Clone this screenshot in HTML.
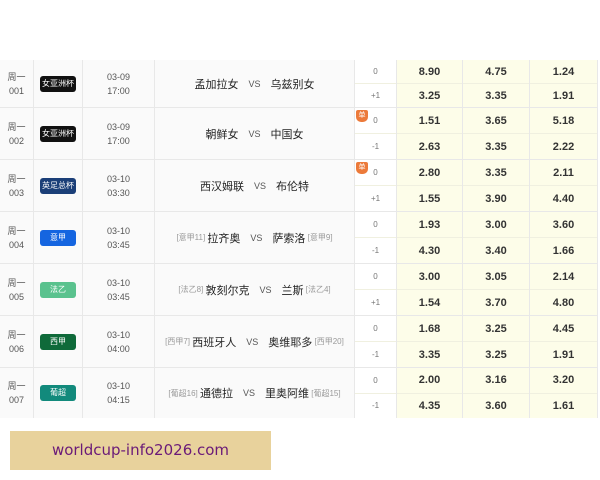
<!DOCTYPE html>
<html><head><meta charset="utf-8"><style>
body{margin:0;width:600px;height:480px;background:#fff;position:relative;overflow:hidden;font-family:"Liberation Sans","Noto Sans CJK SC",sans-serif;}
.row{position:absolute;left:0;width:598px;border-bottom:1px solid #e8e8e8;background:#fafafa;}
.c{position:absolute;top:0;bottom:0;border-right:1px solid #e8e8e8;box-sizing:border-box;display:flex;align-items:center;justify-content:center;text-align:center;}
.n{left:0;width:34px;font-size:9px;color:#555;line-height:14px;}
.b{left:34px;width:49px;}
.b span{display:inline-block;width:36px;height:16px;line-height:16px;border-radius:3px;color:#fff;font-size:8px;white-space:nowrap;overflow:hidden;}
.d{left:83px;width:72px;font-size:9px;color:#555;line-height:14px;}
.t{left:155px;width:200px;font-size:11px;color:#222;}
.t .vs{color:#555;font-size:9px;margin:0 10px;}
.t .r{color:#999;font-size:8px;}
.h{left:355px;width:42px;background:#fff;flex-direction:column;}
.h div,.o div{height:50%;width:100%;display:flex;align-items:center;justify-content:center;}
.h div{font-size:8px;color:#777;}
.h div:first-child,.o div:first-child{border-bottom:1px solid #f0f0e0;}
.o{background:#fdfde9;flex-direction:column;font-size:11px;font-weight:bold;color:#333;}
.o1{left:397px;width:66px}.o2{left:463px;width:67px}.o3{left:530px;width:68px}
.tag{position:absolute;left:356px;top:2px;width:12px;height:12px;background:#ec7a3a;border-radius:2px 2px 5px 5px;color:#fff;font-size:7px;line-height:11px;text-align:center}
</style></head><body>
<div style="position:absolute;left:0;top:60px;width:598px;height:1px;background:#eee"></div>

<div class="row" style="top:60px;height:47px">
<div class="c n">周一<br>001</div><div class="c b"><span style="background:#111">女亚洲杯</span></div><div class="c d">03-09<br>17:00</div>
<div class="c t">孟加拉女<span class="vs">VS</span>乌兹别女</div>
<div class="c h"><div>0</div><div>+1</div></div>
<div class="c o o1"><div>8.90</div><div>3.25</div></div><div class="c o o2"><div>4.75</div><div>3.35</div></div><div class="c o o3"><div>1.24</div><div>1.91</div></div></div>

<div class="row" style="top:108px;height:51px">
<div class="c n">周一<br>002</div><div class="c b"><span style="background:#111">女亚洲杯</span></div><div class="c d">03-09<br>17:00</div>
<div class="c t">朝鲜女<span class="vs">VS</span>中国女</div>
<div class="c h"><div>0</div><div>-1</div></div><div class="tag">单</div>
<div class="c o o1"><div>1.51</div><div>2.63</div></div><div class="c o o2"><div>3.65</div><div>3.35</div></div><div class="c o o3"><div>5.18</div><div>2.22</div></div></div>

<div class="row" style="top:160px;height:51px">
<div class="c n">周一<br>003</div><div class="c b"><span style="background:#1b3f78">英足总杯</span></div><div class="c d">03-10<br>03:30</div>
<div class="c t">西汉姆联<span class="vs">VS</span>布伦特</div>
<div class="c h"><div>0</div><div>+1</div></div><div class="tag">单</div>
<div class="c o o1"><div>2.80</div><div>1.55</div></div><div class="c o o2"><div>3.35</div><div>3.90</div></div><div class="c o o3"><div>2.11</div><div>4.40</div></div></div>

<div class="row" style="top:212px;height:51px">
<div class="c n">周一<br>004</div><div class="c b"><span style="background:#1565e0">意甲</span></div><div class="c d">03-10<br>03:45</div>
<div class="c t"><span class="r">[意甲11]&nbsp;</span>拉齐奥<span class="vs">VS</span>萨索洛<span class="r">&nbsp;[意甲9]</span></div>
<div class="c h"><div>0</div><div>-1</div></div>
<div class="c o o1"><div>1.93</div><div>4.30</div></div><div class="c o o2"><div>3.00</div><div>3.40</div></div><div class="c o o3"><div>3.60</div><div>1.66</div></div></div>

<div class="row" style="top:264px;height:51px">
<div class="c n">周一<br>005</div><div class="c b"><span style="background:#5ac28e">法乙</span></div><div class="c d">03-10<br>03:45</div>
<div class="c t"><span class="r">[法乙8]&nbsp;</span>敦刻尔克<span class="vs">VS</span>兰斯<span class="r">&nbsp;[法乙4]</span></div>
<div class="c h"><div>0</div><div>+1</div></div>
<div class="c o o1"><div>3.00</div><div>1.54</div></div><div class="c o o2"><div>3.05</div><div>3.70</div></div><div class="c o o3"><div>2.14</div><div>4.80</div></div></div>

<div class="row" style="top:316px;height:51px">
<div class="c n">周一<br>006</div><div class="c b"><span style="background:#0f6a3a">西甲</span></div><div class="c d">03-10<br>04:00</div>
<div class="c t"><span class="r">[西甲7]&nbsp;</span>西班牙人<span class="vs">VS</span>奥维耶多<span class="r">&nbsp;[西甲20]</span></div>
<div class="c h"><div>0</div><div>-1</div></div>
<div class="c o o1"><div>1.68</div><div>3.35</div></div><div class="c o o2"><div>3.25</div><div>3.25</div></div><div class="c o o3"><div>4.45</div><div>1.91</div></div></div>

<div class="row" style="top:368px;height:50px;border-bottom:none">
<div class="c n">周一<br>007</div><div class="c b"><span style="background:#128a7c">葡超</span></div><div class="c d">03-10<br>04:15</div>
<div class="c t"><span class="r">[葡超16]&nbsp;</span>通德拉<span class="vs">VS</span>里奥阿维<span class="r">&nbsp;[葡超15]</span></div>
<div class="c h"><div>0</div><div>-1</div></div>
<div class="c o o1"><div>2.00</div><div>4.35</div></div><div class="c o o2"><div>3.16</div><div>3.60</div></div><div class="c o o3"><div>3.20</div><div>1.61</div></div></div>

<div style="position:absolute;left:0;top:418px;width:600px;height:62px;background:#fff"></div>
<div style="position:absolute;left:10px;top:431px;width:261px;height:39px;background:#e8d29c;color:#6a1a78;font-family:'DejaVu Sans',sans-serif;font-size:15px;line-height:39px;text-align:center">worldcup-info2026.com</div>
</body></html>
